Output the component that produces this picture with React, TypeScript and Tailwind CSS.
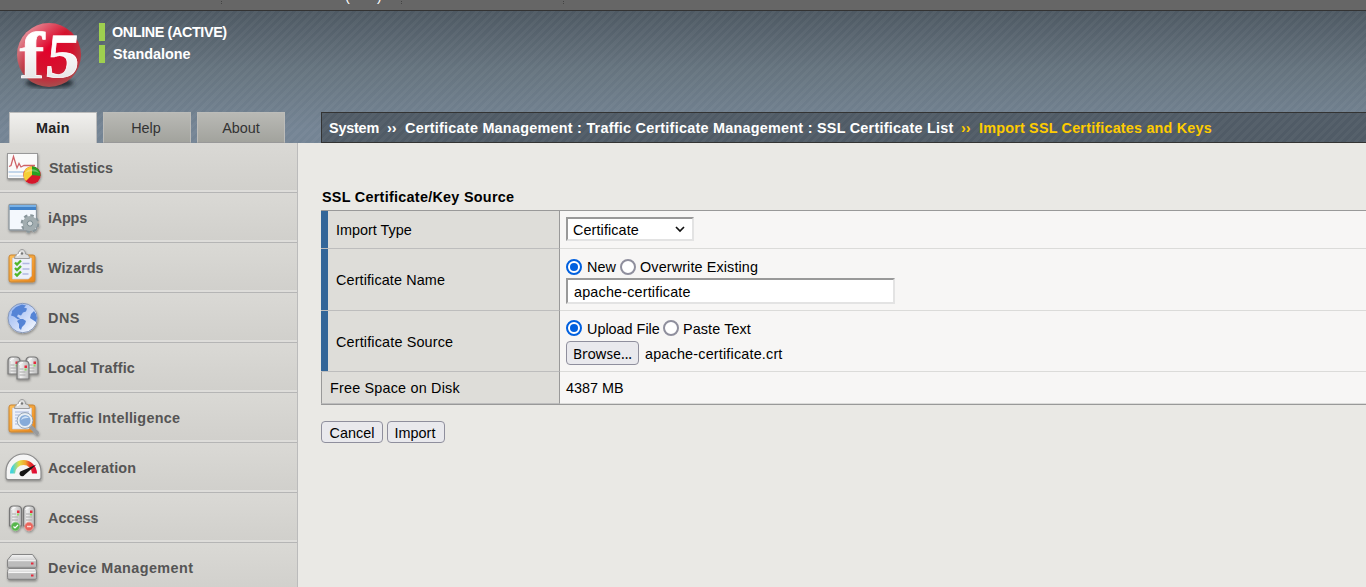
import React from "react";

function Defs() {
  return (
    <svg width="0" height="0" className="absolute" aria-hidden="true">
      <defs>
        <linearGradient id="gOrange" x1="0" y1="0" x2="1" y2="1">
          <stop offset="0" stopColor="#ffc05a" />
          <stop offset="1" stopColor="#e8851a" />
        </linearGradient>
        <linearGradient id="gMetal" x1="0" y1="0" x2="0" y2="1">
          <stop offset="0" stopColor="#f4f4f4" />
          <stop offset="1" stopColor="#a2a2a2" />
        </linearGradient>
        <linearGradient id="gServer" x1="0" y1="0" x2="1" y2="0">
          <stop offset="0" stopColor="#b0b0b0" />
          <stop offset="0.3" stopColor="#f0f0f0" />
          <stop offset="1" stopColor="#b8b8b8" />
        </linearGradient>
        <linearGradient id="gGlobe" x1="0" y1="0" x2="1" y2="1">
          <stop offset="0" stopColor="#8fb1ee" />
          <stop offset="0.5" stopColor="#c6d6f8" />
          <stop offset="1" stopColor="#fdfeff" />
        </linearGradient>
        <linearGradient id="gDial" x1="0" y1="0" x2="1" y2="0">
          <stop offset="0" stopColor="#45d3dc" />
          <stop offset="0.3" stopColor="#e2df45" />
          <stop offset="0.6" stopColor="#f2a02c" />
          <stop offset="0.8" stopColor="#e5342a" />
          <stop offset="1" stopColor="#e00b35" />
        </linearGradient>
        <filter id="soft" x="-20%" y="-20%" width="150%" height="150%">
          <feDropShadow dx="0.5" dy="1.5" stdDeviation="1" floodColor="#000" floodOpacity="0.35" />
        </filter>
      </defs>
    </svg>
  );
}

function Icon({ children }: { children: React.ReactNode }) {
  return (
    <svg width="44" height="47" viewBox="0 0 44 47" className="shrink-0">
      <g filter="url(#soft)">{children}</g>
    </svg>
  );
}

const StatisticsIcon = () => (
  <Icon>
    <rect x="7.5" y="10.5" width="30" height="25" fill="#fafafa" stroke="#999" />
    <path d="M8.500 29h28" stroke="#c3d6ea" strokeWidth="2" />
    <path d="M9 33h16" stroke="#dbe6f1" strokeWidth="2" />
    <path d="M9 23.500l2-1 2.500-9 3.500 11.500 2-4.500 2 3.500 3-1.500h11" fill="none" stroke="#cf6468" strokeWidth="1.300" />
    <circle cx="32" cy="32" r="8.700" fill="#d5152a" />
    <path d="M32 32V23.300A8.700 8.700 0 0 0 26 38z" fill="#f4cf35" />
    <path d="M32 32V23.300A8.700 8.700 0 0 1 40.500 33z" fill="#27a021" />
    <path d="M25 30a7.500 6 0 0 1 14 0 9 5 0 0 0-14 0" fill="#fff" opacity=".3" />
  </Icon>
);

const IAppsIcon = () => (
  <Icon>
    <rect x="9" y="11.500" width="27.500" height="25.500" rx="1" fill="#f4f8fd" stroke="#8c959c" strokeWidth="1.300" />
    <path d="M9.500 12h26.500v5h-26.500z" fill="#3f82c8" />
    <path d="M9.500 12h26.500v2h-26.500z" fill="#79b1e5" />
    <circle cx="30" cy="30.500" r="7.600" fill="none" stroke="#88959a" strokeWidth="3.500" strokeDasharray="3.300 2.670" />
    <circle cx="30" cy="30.500" r="5.200" fill="#b4bebf" stroke="#a2adb0" strokeWidth="4.500" />
    <circle cx="30" cy="30.500" r="2.700" fill="#d9dfe1" stroke="#75868b" />
  </Icon>
);

const ClipBoard = ({ children }: { children: React.ReactNode }) => (
  <Icon>
    <rect x="9" y="12" width="26" height="27" rx="2" fill="url(#gOrange)" stroke="#c78432" />
    <path d="M12.500 15h19v18l-3 3h-16z" fill="#edf1fa" stroke="#cbd0dc" strokeWidth=".7" />
    <path d="M14.500 15.500c0-3 2.500-4.500 4-4.500 0-6 7-6 7 0 2 0 4 1.500 4 4.500z" fill="#dedede" stroke="#949494" strokeWidth=".9" />
    <path d="M17 12.500q3-1 3-3.500" fill="none" stroke="#fff" strokeWidth="1.500" />
    <circle cx="22" cy="10.500" r="1.200" fill="#777" />
    {children}
  </Icon>
);

const WizardsIcon = () => (
  <ClipBoard>
    <path d="M22.500 20.500h7M22.500 26h7M22.500 31h6" stroke="#b1b9e2" strokeWidth="1.700" />
    <path d="M15 19.500l2 2 4-4M15 25l2 2 4-4M15 30.500l2 2 4-4" fill="none" stroke="#52b52b" strokeWidth="2.300" />
  </ClipBoard>
);

const IntelligenceIcon = () => (
  <ClipBoard>
    <path d="M15 19h14M15 22h5M15 25h4M15 28h4M15 31h6" stroke="#aab8dc" strokeWidth="1.200" />
    <path d="M31 34l6 6" stroke="#989b9e" strokeWidth="4" strokeLinecap="round" />
    <circle cx="25" cy="27.500" r="6.800" fill="#86abd9" stroke="#e8eef4" strokeWidth="2.500" />
    <circle cx="25" cy="27.500" r="7.900" fill="none" stroke="#8092a5" strokeWidth=".8" />
    <path d="M21 27a4.500 4.500 0 0 1 8-2 8 5 0 0 0-8 2" fill="#d1e3f6" />
  </ClipBoard>
);

const DnsIcon = () => (
  <Icon>
    <circle cx="22.700" cy="25" r="14.700" fill="url(#gGlobe)" stroke="#8798b8" />
    <path d="M12 18l4-4 6-2.500 4 1-2 2 3 1-1 3-3 1-2 3-3-1-1 2 3 2-2 1-4-3-3-1 1-3zM20 26l3 0 3 2-1 3-3 3-1 3-2-2v-4l-2-3zM31 21l3-3 2 3 1 4-1 4-3-2-3-2z" fill="#5584d6" />
  </Icon>
);

function Server({ x, y, h = 19, w = 12 }: { x: number; y: number; h?: number; w?: number }) {
  return (
    <g transform={`translate(${x} ${y})`}>
      <path d={`M0 ${h}V4Q0 0 4 0H${w - 4}Q${w} 0 ${w} 4V${h}z`} fill="url(#gServer)" stroke="#777" strokeWidth="1.200" />
      <path d="M2 4Q3 1.500 6 1.500" stroke="#fff" fill="none" />
      <path d="M2.500 8h4M2.500 11h6M2.500 14h6" stroke="#aaa" />
      <rect x={w - 4.5} y="4.500" width="2.500" height="2.500" fill="#e6293c" />
      <rect x={w - 4.5} y="7.500" width="2" height="2" fill="#8bdc6c" />
    </g>
  );
}

const LocalTrafficIcon = () => (
  <Icon><Server x={8} y={14} h={17} /><Server x={26} y={14} h={17} /><Server x={17} y={18} h={18} /></Icon>
);

const AccessIcon = () => (
  <Icon>
    <Server x={9.500} y={13} h={20} w={12} /><Server x={23.500} y={13} h={20} w={11} />
    <circle cx="15.500" cy="33.500" r="4.200" fill="#55b64b" stroke="#8fca86" strokeWidth=".7" />
    <path d="M13.500 33.500l1.500 1.500 3-3" fill="none" stroke="#fff" strokeWidth="1.200" />
    <circle cx="29" cy="33.500" r="4.200" fill="#e8655c" stroke="#ee9892" strokeWidth=".7" />
    <path d="M27 33.500h4" stroke="#ffd7d4" strokeWidth="1.500" />
  </Icon>
);

const AccelerationIcon = () => (
  <Icon>
    <path d="M6 34V28a17.500 17.500 0 0 1 35 0v6q0 2-2 2H8q-2 0-2-2z" transform="translate(0 .5)" fill="#f5f5f5" stroke="#8b8b8b" strokeWidth="1.200" />
    <path d="M12.500 30.500a11 11 0 0 1 22 0" fill="none" stroke="url(#gDial)" strokeWidth="5" />
    <path d="M36.500 21.500L21.500 28a2.700 2.700 0 1 0 3 4z" fill="#171717" />
  </Icon>
);

const DeviceIcon = () => (
  <Icon>
    <path d="M7.500 17l4.500-5.500h20.500l4 5.500v6.500q0 1.500-1.500 1.500H9q-1.500 0-1.500-1.500z" fill="url(#gMetal)" stroke="#858585" />
    <path d="M9 25.500h26q1.500 1 1.500 3v6q0 2-1.500 2H9q-1.500 0-1.500-2v-6q0-2 1.500-3z" fill="url(#gMetal)" stroke="#858585" />
    <path d="M8.500 17.700h27M8.500 29.500h27" stroke="#f6f6f6" />
    <path d="M8.500 18.500h27.500v5H8.500zM8.500 30.300h27.500v5H8.500z" fill="#bcbcbc" />
    <path d="M31 19.500h2.500v2H31zM31 31.500h2.500v2H31z" fill="#e6293c" />
  </Icon>
);

const NAV = [
  { label: "Statistics", Glyph: StatisticsIcon, style: "pl-[5px]" },
  { label: "iApps", Glyph: IAppsIcon, style: "pl-1 -tracking-[0.2px]" },
  { label: "Wizards", Glyph: WizardsIcon, style: "pl-1 tracking-[0.08px]" },
  { label: "DNS", Glyph: DnsIcon, style: "pl-1 tracking-[0.5px]" },
  { label: "Local Traffic", Glyph: LocalTrafficIcon, style: "pl-1 tracking-[0.17px]" },
  { label: "Traffic Intelligence", Glyph: IntelligenceIcon, style: "pl-[5px] tracking-[0.24px]" },
  { label: "Acceleration", Glyph: AccelerationIcon, style: "pl-1 tracking-[0.15px]" },
  { label: "Access", Glyph: AccessIcon, style: "pl-1" },
  { label: "Device Management", Glyph: DeviceIcon, style: "pl-1 tracking-[0.41px]" },
];

function Logo() {
  return (
    <svg width="76" height="76" viewBox="0 0 76 76" className="mt-[5px] ml-[11px] shrink-0">
      <defs>
        <radialGradient id="ball" cx=".5" cy=".4" r=".62">
          <stop offset="0" stopColor="#e3002b" />
          <stop offset=".6" stopColor="#d3142e" />
          <stop offset="1" stopColor="#a45351" />
        </radialGradient>
        <linearGradient id="shine" x1="0" y1="0" x2=".65" y2=".7">
          <stop offset="0" stopColor="#fff" stopOpacity=".7" />
          <stop offset=".65" stopColor="#fff" stopOpacity="0" />
        </linearGradient>
        <linearGradient id="letter" x1="0" y1="0" x2="0" y2="1">
          <stop offset=".3" stopColor="#fff" />
          <stop offset="1" stopColor="#dedede" />
        </linearGradient>
        <filter id="blur"><feGaussianBlur stdDeviation="2" /></filter>
      </defs>
      <ellipse cx="38.500" cy="67" rx="24" ry="5" fill="#202a32" filter="url(#blur)" />
      <circle cx="38" cy="39" r="32" fill="url(#ball)" />
      <circle cx="38" cy="39" r="32" fill="url(#shine)" />
      <g fontFamily="Liberation Serif, serif" fontWeight="700" fill="url(#letter)" stroke="#fff" strokeWidth=".7">
        <text x="8.500" y="61.500" fontSize="65" textLength="25" lengthAdjust="spacingAndGlyphs">f</text>
        <text x="33" y="61.500" fontSize="63" textLength="34" lengthAdjust="spacingAndGlyphs" transform="translate(6.500 0) skewX(-6)">5</text>
      </g>
    </svg>
  );
}

const STRIPES = "bg-[repeating-linear-gradient(135deg,rgba(255,255,255,0.035)_0_3px,transparent_3px_6px)]";

function Radio({ on = false }: { on?: boolean }) {
  return (
    <svg width="16" height="16" viewBox="0 0 16 16" className="mb-px shrink-0">
      <circle cx="8" cy="8" r="7" fill="#fff" stroke={on ? "#0060df" : "#8f8f9d"} strokeWidth="2" />
      {on && <circle cx="8" cy="8" r="4" fill="#0060df" />}
    </svg>
  );
}

type RowProps = { label: string; height: string; labelStyle?: string; required?: boolean; children: React.ReactNode };

function Row({ label, height, labelStyle = "", required = true, children }: RowProps) {
  return (
    <div className={`flex ${height}`}>
      <div className={`flex w-[239px] shrink-0 items-center border-r border-b border-r-[#999] border-b-[#bdbdbd] bg-[#deddd9] ${required ? "" : "border-l border-l-[#999]"}`}>
        {required && <div className="h-full w-[7px] bg-[#336699]" />}
        <span className={`pl-2 ${labelStyle}`}>{label}</span>
      </div>
      <div className="flex-1 border-b border-[#dbdbd9] bg-[#f7f6f5] pl-1.5">{children}</div>
    </div>
  );
}

const BUTTON = "flex items-center justify-center rounded-[4px] border border-[#8f8f9d] bg-[#e9e9ed]";
const FIELD = "flex items-center border-2 border-[#999] border-r-[#e3e3e3] border-b-[#e3e3e3] bg-white";

export default function App() {
  return (
    <div className="flex h-[587px] w-[1366px] flex-col overflow-hidden bg-[#eae9e5] font-['Liberation_Sans',Arial,sans-serif] text-[14.4px] leading-[18px] text-black">
      <Defs />
      <div className="relative h-[11px] shrink-0 overflow-hidden border-b border-[#333] bg-[#666]">
        <span className="absolute -top-[13px] left-[345px] text-white">(</span>
        <span className="absolute -top-[13px] left-[377px] text-white">)</span>
        <i className="absolute top-px left-[221px] h-[3px] border-l border-dotted border-[#444]" />
        <i className="absolute top-px left-[401px] h-[3px] border-l border-dotted border-[#444]" />
        <i className="absolute top-px left-[563px] h-[3px] border-l border-dotted border-[#444]" />
      </div>
      <header className="h-[132px] shrink-0 bg-[linear-gradient(#4e5963,#66747f_45%,#748494_90%)]">
        <div className={`flex h-full flex-col justify-between ${STRIPES}`}>
          <div className="flex">
            <Logo />
            <div className="mt-3 ml-3 flex flex-col gap-1 font-bold text-white">
              <div className="flex h-[18px] border-l-[6px] border-[#9fd04f] pl-[7px]"><span className="-tracking-[0.4px]">ONLINE (ACTIVE)</span></div>
              <div className="flex h-[18px] border-l-[6px] border-[#9fd04f] pl-2">Standalone</div>
            </div>
          </div>
          <div className="flex h-[31px] pl-[9px]">
            <nav className="flex w-[312px] shrink-0 gap-1.5 text-[#333]">
              <div className="flex w-[88px] items-center justify-center border border-b-0 border-[#bbb] bg-linear-to-b from-[#f1f0ee] to-[#dcdbd7] font-bold tracking-[0.25px] text-[#222]">Main</div>
              <div className="flex w-[88px] items-center justify-center border border-[#bcbcb9] border-b-[#999] bg-linear-to-b from-[#b9b9b5] to-[#a2a39d] pr-0.5">Help</div>
              <div className="flex w-[88px] items-center justify-center border border-[#bcbcb9] border-b-[#999] bg-linear-to-b from-[#b9b9b5] to-[#a2a39d]">About</div>
            </nav>
            <div className={`flex flex-1 items-center border border-r-0 border-[#333] bg-[#505b66] pl-[7px] font-bold whitespace-nowrap text-white ${STRIPES}`}>
              <span className="w-[58px] -tracking-[0.2px]">System</span>
              <span className="w-[18px]">››</span>
              <span className="w-[556px] tracking-[0.25px]">Certificate Management : Traffic Certificate Management : SSL Certificate List</span>
              <span className="w-[18px] text-[#fc0]">››</span>
              <span className="tracking-[0.19px] text-[#fc0]">Import SSL Certificates and Keys</span>
            </div>
          </div>
        </div>
      </header>
      <div className="flex min-h-0 flex-1">
        <aside className="w-[298px] shrink-0 overflow-hidden border-r border-[#bbb] bg-[#d9d8d5] font-bold text-[#555]">
          {NAV.map(({ label, Glyph, style }) => (
            <div key={label} className="flex h-[50px] flex-col border-b border-[#b5b5b5] bg-[#deddda]">
              <div className="flex h-[47px] items-start bg-linear-to-b from-[#dad9d5] to-[#d1d0cc]">
                <Glyph />
                <span className={`pt-4 ${style}`}>{label}</span>
              </div>
            </div>
          ))}
        </aside>
        <main className="min-w-0 flex-1 pl-[23px]">
          <h1 className="mt-[45px] pl-px font-bold tracking-[0.27px]">SSL Certificate/Key Source</h1>
          <section className="mt-1 border-y border-[#999]">
            <Row label="Import Type" height="h-[38px]">
              <div className={`mt-1.5 h-6 w-32 justify-between pr-1.5 pl-[5px] ${FIELD}`}>
                <span className="pt-px tracking-[0.1px]">Certificate</span>
                <svg width="12" height="12" viewBox="0 0 12 12"><path d="M2 4l4 4 4-4" fill="none" stroke="#111" strokeWidth="1.700" /></svg>
              </div>
            </Row>
            <Row label="Certificate Name" height="h-[62px]" labelStyle="tracking-[0.12px]">
              <div className="flex h-[27px] items-end">
                <Radio on /><span className="w-[33px] pl-[5px]">New</span>
                <span className="w-[21px] shrink-0 pl-[5px]"><Radio /></span><span className="pl-1 tracking-[0.12px]">Overwrite Existing</span>
              </div>
              <div className={`mt-0.5 h-[26px] w-[329px] pt-0.5 pl-1.5 tracking-[0.17px] ${FIELD}`}>apache-certificate</div>
            </Row>
            <Row label="Certificate Source" height="h-[61px]" labelStyle="pt-0.5 tracking-[0.16px]">
              <div className="flex h-[27px] items-end pb-px">
                <Radio on /><span className="w-[81px] translate-y-px pl-[5px]">Upload File</span>
                <Radio /><span className="translate-y-px pl-1 tracking-[0.1px]">Paste Text</span>
              </div>
              <div className="mt-[3px] flex items-center">
                <div className={`h-6 w-[73px] pt-px font-['Noto_Sans',sans-serif] text-[13.9px] ${BUTTON}`}>Browse...</div>
                <span className="pt-0.5 pl-1.5 tracking-[0.18px]">apache-certificate.crt</span>
              </div>
            </Row>
            <Row label="Free Space on Disk" height="h-[32px]" required={false} labelStyle="tracking-[0.19px]">
              <div className="pt-[7px]">4387 MB</div>
            </Row>
          </section>
          <div className="mt-4 flex gap-1">
            <div className={`h-[22px] w-[62px] pt-0.5 ${BUTTON}`}>Cancel</div>
            <div className={`h-[22px] w-[58px] pt-0.5 pr-0.5 ${BUTTON}`}>Import</div>
          </div>
        </main>
      </div>
    </div>
  );
}
